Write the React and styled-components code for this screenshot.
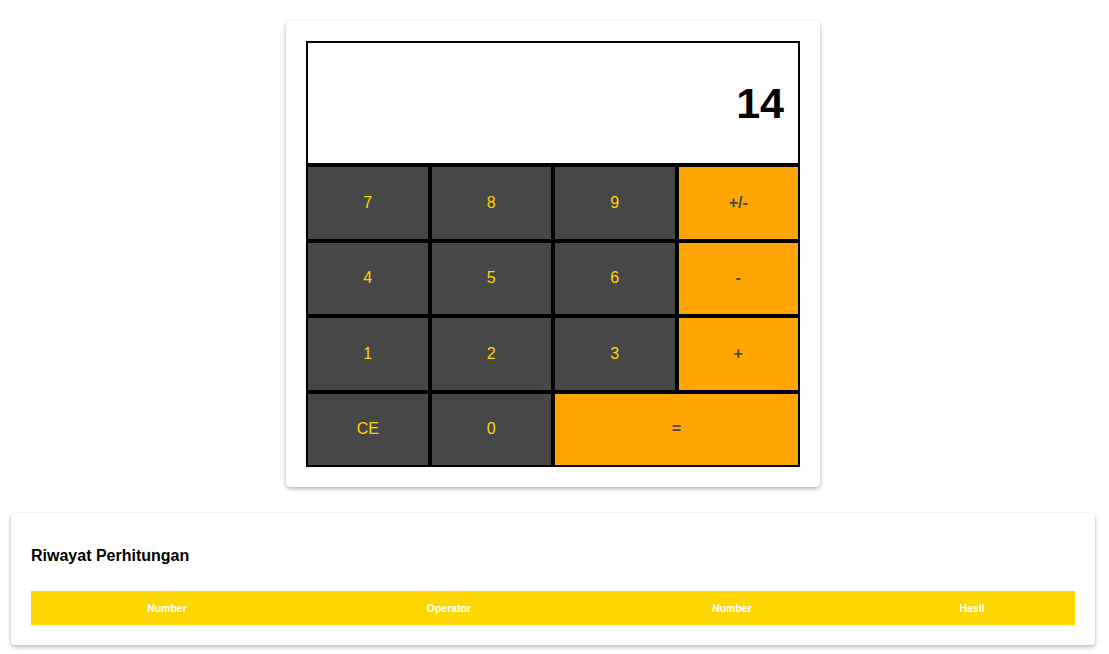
import React from 'react'
import styled, { createGlobalStyle } from 'styled-components'

const GlobalStyle = createGlobalStyle`
  body {
    margin: 0;
    background: #ffffff;
    font-family: "Liberation Sans", Arial, sans-serif;
  }
`

const Page = styled.div`
  display: flex;
  flex-direction: column;
  align-items: center;
  padding: 21px 14px 9px 11px;
  gap: 26px;
`

const Card = styled.div`
  box-sizing: border-box;
  background: #fff;
  border-radius: 4px;
  box-shadow: 0 2px 4px rgba(0, 0, 0, 0.28), 0 0 2px rgba(0, 0, 0, 0.08);
  padding: 20px;
  width: ${p => p.$width || '100%'};
`

const Display = styled.div`
  box-sizing: border-box;
  height: 124px;
  border: 2px solid #000;
  display: flex;
  align-items: center;
  justify-content: flex-end;
  padding-right: 14px;
  font-size: 43px;
  font-weight: bold;
  color: #000;
`

const Keypad = styled.div`
  display: grid;
  grid-template-columns: repeat(4, 1fr);
  grid-auto-rows: 75.5px;
`

const Key = styled.button`
  box-sizing: border-box;
  border: 2px solid #000;
  border-radius: 0;
  margin: 0;
  padding: 0;
  font-family: "Liberation Sans", Arial, sans-serif;
  font-size: 16px;
  font-weight: ${p => (p.$op ? 'bold' : 'normal')};
  background: ${p => (p.$op ? '#ffa500' : '#474747')};
  color: ${p => (p.$op ? '#474747' : '#ffd700')};
  grid-column: span ${p => p.$span || 1};
  cursor: pointer;
`

const Title = styled.h4`
  margin: 14px 0 26px;
  font-size: 16px;
  line-height: 18px;
  font-weight: bold;
  color: #000;
`

const Table = styled.table`
  width: 100%;
  border-collapse: collapse;
  table-layout: fixed;
`

const Th = styled.th`
  background: #ffd700;
  color: #fff;
  font-size: 10.5px;
  font-weight: bold;
  height: 34px;
  padding: 0;
  text-align: center;
  width: ${p => p.$w};
`

const keys = [
  ['7'], ['8'], ['9'], ['+/-', true],
  ['4'], ['5'], ['6'], ['-', true],
  ['1'], ['2'], ['3'], ['+', true],
  ['CE'], ['0'], ['=', true, 2],
]

const columns = [
  ['Number', '26.05%'],
  ['Operator', '27.97%'],
  ['Number', '26.25%'],
  ['Hasil', '19.73%'],
]

export default function App() {
  return (
    <>
      <GlobalStyle />
      <Page>
        <Card $width="534px">
          <Display>14</Display>
          <Keypad>
            {keys.map(([label, op, span], i) => (
              <Key key={i} $op={op} $span={span}>{label}</Key>
            ))}
          </Keypad>
        </Card>
        <Card>
          <Title>Riwayat Perhitungan</Title>
          <Table>
            <thead>
              <tr>
                {columns.map(([c, w], i) => (
                  <Th key={i} $w={w}>{c}</Th>
                ))}
              </tr>
            </thead>
          </Table>
        </Card>
      </Page>
    </>
  )
}
